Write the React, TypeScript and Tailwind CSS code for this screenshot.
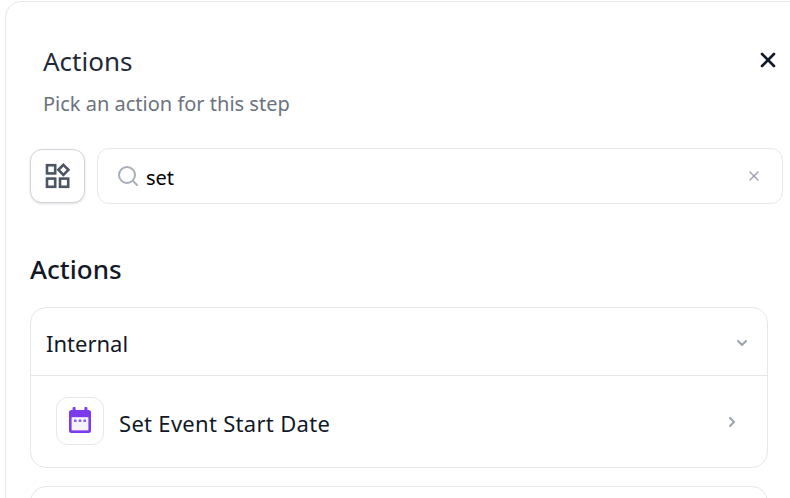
import { ChevronDown, ChevronRight, Search, X } from 'lucide-react'

const FONT = "font-['Noto_Sans','Open_Sans',sans-serif]"

function WidgetsIcon() {
  return (
    <svg width="26" height="26" viewBox="0 0 26 26" fill="none" stroke="#4b5563" strokeWidth="2.6">
      <rect x="2" y="2.2" width="8.2" height="8.2" />
      <rect x="2" y="15.6" width="8.2" height="8.2" />
      <rect x="15" y="15.6" width="8.2" height="8.2" />
      <path d="M18.4 1.8 L23.4 6.8 L18.4 11.8 L13.4 6.8 Z" />
    </svg>
  )
}

function CalendarIcon() {
  return (
    <svg width="24" height="26" viewBox="0 0 24 26" fill="none">
      <rect x="4.6" y="0" width="3" height="6" rx="1" fill="#7c3aed" />
      <rect x="16.4" y="0" width="3" height="6" rx="1" fill="#7c3aed" />
      <rect x="1" y="3" width="22" height="23" rx="2.5" fill="#7c3aed" />
      <rect x="3.6" y="10.2" width="16.8" height="13.2" fill="#f5f3ff" />
      <rect x="6" y="12.4" width="2.6" height="2.6" rx="0.5" fill="#8b5cf6" />
      <rect x="10.7" y="12.4" width="2.6" height="2.6" rx="0.5" fill="#8b5cf6" />
      <rect x="15.4" y="12.4" width="2.6" height="2.6" rx="0.5" fill="#8b5cf6" />
    </svg>
  )
}

export default function App() {
  return (
    <div className={`${FONT} h-[498px] w-[790px] overflow-hidden bg-white pl-[5px] pt-px`}>
      <div className="h-[600px] w-[900px] rounded-tl-2xl border border-[#e5e7eb] bg-white pl-6 pt-[41px]">
        <div className="w-[738px]">
          <div className="flex items-start justify-between pl-[13px]">
            <div>
              <h2 className="text-[26px] leading-9 text-[#1f2937]">Actions</h2>
              <p className="mt-[13px] text-[20px] leading-6 text-[#6b7280]">Pick an action for this step</p>
            </div>
            <button type="button" className="mr-[-12px] mt-[5px] text-[#111827]">
              <X className="h-6 w-6" strokeWidth={2.6} />
            </button>
          </div>

          <div className="mt-8 flex w-[753px] items-center gap-3">
            <button
              type="button"
              className="flex h-[54px] w-[55px] shrink-0 items-center justify-center rounded-xl border border-[#d1d5db] bg-white shadow-sm"
            >
              <WidgetsIcon />
            </button>
            <div className="flex h-14 flex-1 items-center rounded-xl border border-[#e5e7eb] bg-white pl-[18px] pr-[20px]">
              <Search className="h-6 w-6 text-[#a8afba]" strokeWidth={2} />
              <span className="ml-[6px] flex-1 pt-1 text-[20px] text-black">set</span>
              <X className="h-[16px] w-[16px] text-[#9ca3af]" strokeWidth={2} />
            </div>
          </div>

          <h3 className="mt-[47px] text-[26px] font-medium leading-9 text-[#111827]">Actions</h3>

          <div className="mt-5 overflow-hidden rounded-2xl border border-[#e5e7eb]">
            <div className="flex h-[68px] items-center justify-between border-b border-[#e5e7eb] pl-[15px] pr-[17px]">
              <span className="pt-1 text-[22px] text-[#111827]">Internal</span>
              <ChevronDown className="mt-0.5 h-[16px] w-[16px] text-[#9ca3af]" strokeWidth={3} />
            </div>
            <div className="flex h-[91px] items-center pb-px pl-[25px] pr-[27px]">
              <div className="flex h-12 w-12 items-center justify-center rounded-xl border border-[#e5e7eb] pb-0.5">
                <CalendarIcon />
              </div>
              <span className="ml-[15px] flex-1 pt-[5px] text-[22px] tracking-[0.3px] text-[#111827]">
                Set Event Start Date
              </span>
              <ChevronRight className="mt-0.5 h-[16px] w-[16px] text-[#9ca3af]" strokeWidth={3} />
            </div>
          </div>

          <div className="mt-[18px] h-20 rounded-2xl border border-[#e5e7eb]" />
        </div>
      </div>
    </div>
  )
}
